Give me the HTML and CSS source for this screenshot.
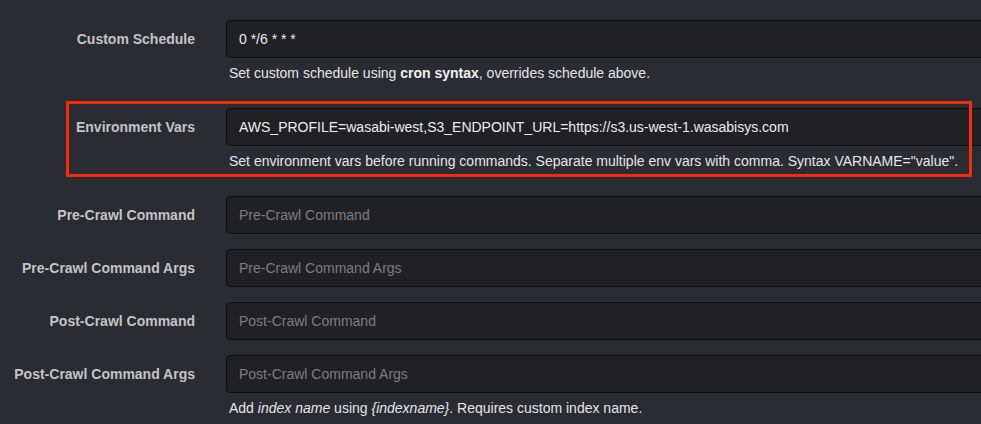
FILE: index.html
```html
<!DOCTYPE html>
<html lang="en">
<head>
<meta charset="utf-8">
<title>Crawl settings</title>
<link rel="stylesheet" href="styles.css">
</head>
<body>
<form class="form">
  <div class="row">
    <label class="label" for="cs">Custom Schedule</label>
    <input class="input" id="cs" type="text" value="0 */6 * * *">
    <p class="help">Set custom schedule using <b>cron syntax</b>, overrides schedule above.</p>
  </div>
  <div class="row row-highlight">
    <label class="label" for="ev">Environment Vars</label>
    <input class="input" id="ev" type="text" value="AWS_PROFILE=wasabi-west,S3_ENDPOINT_URL=https://s3.us-west-1.wasabisys.com">
    <p class="help">Set environment vars before running commands. Separate multiple env vars with comma. Syntax VARNAME="value".</p>
    <span class="annotation"></span>
  </div>
  <div class="row">
    <label class="label" for="pc">Pre-Crawl Command</label>
    <input class="input" id="pc" type="text" placeholder="Pre-Crawl Command">
  </div>
  <div class="row">
    <label class="label" for="pca">Pre-Crawl Command Args</label>
    <input class="input" id="pca" type="text" placeholder="Pre-Crawl Command Args">
  </div>
  <div class="row">
    <label class="label" for="poc">Post-Crawl Command</label>
    <input class="input" id="poc" type="text" placeholder="Post-Crawl Command">
  </div>
  <div class="row">
    <label class="label" for="poca">Post-Crawl Command Args</label>
    <input class="input" id="poca" type="text" placeholder="Post-Crawl Command Args">
    <p class="help">Add <i>index name</i> using <i>{indexname}</i>. Requires custom index name.</p>
  </div>
</form>
</body>
</html>
```

FILE: styles.css
```css
html, body {
  margin: 0;
  padding: 0;
  background: #292c32;
  overflow: hidden;
}
body {
  font-family: "Liberation Sans", Arial, sans-serif;
  color: #e4e4e4;
}
.form {
  width: 1010px;
  padding-top: 20px;
}
.row {
  position: relative;
  display: grid;
  grid-template-columns: 195px 1fr;
  column-gap: 31px;
  margin-bottom: 15px;
}
.label {
  grid-column: 1;
  grid-row: 1;
  align-self: center;
  text-align: right;
  font-size: 14px;
  font-weight: bold;
  color: #c4c4c4;
}
.input {
  grid-column: 2;
  grid-row: 1;
  box-sizing: border-box;
  height: 38px;
  width: 100%;
  margin: 0;
  padding: 0 12px;
  background: #202125;
  border: 1px solid #0e0e0f;
  border-radius: 4px;
  color: #ececec;
  font-family: "Liberation Sans", Arial, sans-serif;
  font-size: 14px;
  outline: none;
}
.input::placeholder {
  color: #7d7e80;
}
.help {
  grid-column: 2;
  grid-row: 2;
  margin: 6px 0 0 3px;
  height: 29px;
  line-height: 18px;
  font-size: 14px;
  color: #e6e6e6;
}
.help b { font-weight: bold; color: #f2f2f2; }
.annotation {
  position: absolute;
  left: 66px;
  top: -7px;
  width: 906px;
  height: 76px;
  box-sizing: border-box;
  border: 3px solid #fa2a0c;
  pointer-events: none;
}
```
